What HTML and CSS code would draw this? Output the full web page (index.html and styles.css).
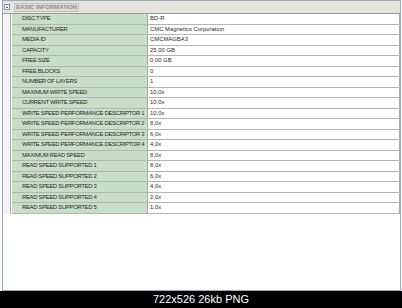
FILE: index.html
```html
<!DOCTYPE html>
<html>
<head>
<meta charset="utf-8">
<link rel="stylesheet" href="styles.css">
</head>
<body>
<div class="frame">
  <div class="header">
    <span class="toggle"><span class="minus"></span></span>
    <span class="section">BASIC INFORMATION</span>
  </div>
  <div class="body">
    <div class="gutter"></div>
    <div class="table">
      <div class="row"><div class="k">DISC TYPE</div><div class="v">BD-R</div></div>
      <div class="row"><div class="k">MANUFACTURER</div><div class="v">CMC Magnetics Corporation</div></div>
      <div class="row"><div class="k">MEDIA ID</div><div class="v">CMCMAGBA3</div></div>
      <div class="row"><div class="k">CAPACITY</div><div class="v">25,00 GB</div></div>
      <div class="row"><div class="k">FREE SIZE</div><div class="v">0,00 GB</div></div>
      <div class="row"><div class="k">FREE BLOCKS</div><div class="v">0</div></div>
      <div class="row"><div class="k">NUMBER OF LAYERS</div><div class="v">1</div></div>
      <div class="row"><div class="k">MAXIMUM WRITE SPEED</div><div class="v">10,0x</div></div>
      <div class="row"><div class="k">CURRENT WRITE SPEED</div><div class="v">10,0x</div></div>
      <div class="row"><div class="k">WRITE SPEED PERFORMANCE DESCRIPTOR 1</div><div class="v">10,0x</div></div>
      <div class="row"><div class="k">WRITE SPEED PERFORMANCE DESCRIPTOR 2</div><div class="v">8,0x</div></div>
      <div class="row"><div class="k">WRITE SPEED PERFORMANCE DESCRIPTOR 3</div><div class="v">6,0x</div></div>
      <div class="row"><div class="k">WRITE SPEED PERFORMANCE DESCRIPTOR 4</div><div class="v">4,0x</div></div>
      <div class="row"><div class="k">MAXIMUM READ SPEED</div><div class="v">8,0x</div></div>
      <div class="row"><div class="k">READ SPEED SUPPORTED 1</div><div class="v">8,0x</div></div>
      <div class="row"><div class="k">READ SPEED SUPPORTED 2</div><div class="v">6,0x</div></div>
      <div class="row"><div class="k">READ SPEED SUPPORTED 3</div><div class="v">4,0x</div></div>
      <div class="row"><div class="k">READ SPEED SUPPORTED 4</div><div class="v">2,0x</div></div>
      <div class="row"><div class="k">READ SPEED SUPPORTED 5</div><div class="v">1,0x</div></div>
    </div>
  </div>
</div>
<div class="caption">722x526 26kb PNG</div>
</body>
</html>
```
FILE: styles.css
```css
html, body {
  margin: 0;
  padding: 0;
  background: #ffffff;
}
body {
  width: 402px;
  height: 308px;
  overflow: hidden;
  font-family: "Liberation Sans", Arial, sans-serif;
}
.frame {
  box-sizing: border-box;
  margin-left: 2px;
  width: 399px;
  height: 291px;
  border: 1px solid #9aa9bf;
  background: #ffffff;
}
.header {
  box-sizing: border-box;
  height: 13px;
  background: #e6e4de;
  border-bottom: 1px solid #9a9a9a;
  display: flex;
  align-items: center;
  padding-left: 1px;
  gap: 4px;
}
.toggle {
  box-sizing: border-box;
  width: 6px;
  height: 6px;
  border: 1px solid #7f93b3;
  background: #f4f6fa;
  display: flex;
  align-items: center;
  justify-content: center;
}
.minus {
  width: 2px;
  height: 1px;
  background: #4a5a78;
}
.section {
  box-sizing: border-box;
  height: 9px;
  padding: 0 1px;
  background: #dedcd6;
  border: 1px solid #c2c0ba;
  color: #8e8e8e;
  font-size: 5.9px;
  font-weight: bold;
  line-height: 7px;
  white-space: nowrap;
}
.body {
  display: flex;
}
.gutter {
  box-sizing: border-box;
  width: 8px;
  background: #f3f3f3;
  border-right: 1px solid #a9a9a9;
}
.table {
  flex: 1;
  display: flex;
  flex-direction: column;
  padding-left: 1px;
}
.row {
  box-sizing: border-box;
  height: 10.53px;
  display: flex;
  border-bottom: 1px solid #b4b4b4;
  font-size: 5.9px;
  line-height: 9px;
  color: #2a2a2a;
}
.k {
  box-sizing: border-box;
  width: 136px;
  background: #c7dfc4;
  border-right: 1px solid #a8a8a8;
  padding-left: 10px;
  letter-spacing: -0.3px;
  white-space: nowrap;
  overflow: hidden;
}
.v {
  flex: 1;
  padding-left: 2px;
  border-right: 1px solid #a8a8a8;
  white-space: nowrap;
}
.caption {
  height: 17px;
  background: #000000;
  color: #ffffff;
  font-family: "Liberation Sans", Arial, sans-serif;
  font-size: 11px;
  line-height: 17px;
  text-align: center;
}
```
